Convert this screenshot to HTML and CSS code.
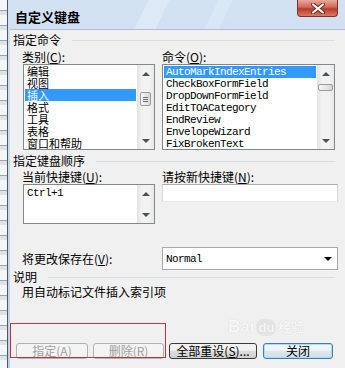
FILE: index.html
```html
<!DOCTYPE html>
<html lang="zh-CN">
<head>
    <meta charset="UTF-8">
    <meta name="viewport" content="width=device-width, initial-scale=1.0">
    <title>自定义键盘</title>
    <link rel="stylesheet" href="styles.css">
</head>
<body>
    <div class="screen">
        <div class="backdrop"></div>
        <div class="window">
            <div class="titlebar">
                <span class="title">自定义键盘</span>
                <div class="close-btn">
                    <svg width="16" height="11" viewBox="0 0 16 11">
                        <path d="M3 1.5 L13 9.5 M13 1.5 L3 9.5" stroke="#6a2a22" stroke-width="4" stroke-linecap="round"/>
                        <path d="M3 1.5 L13 9.5 M13 1.5 L3 9.5" stroke="#ffffff" stroke-width="2.2" stroke-linecap="round"/>
                    </svg>
                </div>
            </div>

            <div class="dialog">
                <div class="group-head"><span>指定命令</span><span class="rule"></span></div>
                <div class="cols first">
                    <div class="col-left">
                        <div class="label">类别(<u>C</u>):</div>
                        <div class="listbox list-cat">
                            <ul class="items">
                                <li>编辑</li>
                                <li>视图</li>
                                <li class="sel">插入</li>
                                <li>格式</li>
                                <li>工具</li>
                                <li>表格</li>
                                <li>窗口和帮助</li>
                            </ul>
                            <div class="vscroll">
                                <div class="sb-btn up"></div>
                                <div class="track"><div class="thumb thumb-cat"><span></span><span></span><span></span></div></div>
                                <div class="sb-btn down"></div>
                            </div>
                        </div>
                    </div>
                    <div class="col-right">
                        <div class="label">命令(<u>O</u>):</div>
                        <div class="listbox list-cmd">
                            <ul class="items mono">
                                <li class="sel">AutoMarkIndexEntries</li>
                                <li>CheckBoxFormField</li>
                                <li>DropDownFormField</li>
                                <li>EditTOACategory</li>
                                <li>EndReview</li>
                                <li>EnvelopeWizard</li>
                                <li>FixBrokenText</li>
                            </ul>
                            <div class="vscroll">
                                <div class="sb-btn up"></div>
                                <div class="track"><div class="thumb thumb-cmd"></div></div>
                                <div class="sb-btn down"></div>
                            </div>
                        </div>
                    </div>
                </div>

                <div class="group-head second"><span>指定键盘顺序</span><span class="rule"></span></div>
                <div class="cols keys">
                    <div class="col-left">
                        <div class="label">当前快捷键(<u>U</u>):</div>
                        <div class="listbox list-keys">
                            <ul class="items mono">
                                <li>Ctrl+1</li>
                            </ul>
                            <div class="vscroll">
                                <div class="sb-btn up"></div>
                                <div class="track"></div>
                                <div class="sb-btn down"></div>
                            </div>
                        </div>
                    </div>
                    <div class="col-right">
                        <div class="label">请按新快捷键(<u>N</u>):</div>
                        <div class="textbox"></div>
                    </div>
                </div>

                <div class="cols save">
                    <div class="col-left save-label">将更改保存在(<u>V</u>):</div>
                    <div class="col-right">
                        <div class="combo"><span class="mono">Normal</span><span class="combo-arrow"></span></div>
                    </div>
                </div>

                <div class="group-head"><span>说明</span><span class="rule"></span></div>
                <div class="desc">用自动标记文件插入索引项</div>

                <div class="buttons">
                    <button class="btn btn-assign" disabled>指定(<u>A</u>)</button>
                    <button class="btn btn-remove" disabled>删除(<u>R</u>)</button>
                    <button class="btn btn-reset">全部重设(<u>S</u>)...</button>
                    <button class="btn btn-close">关闭</button>
                </div>
            </div>
        </div>

        <div class="annot"></div>
        <div class="watermark"><span class="wm-bai">Bai</span><span class="wm-du">du</span><span class="wm-jy">经验</span></div>
    </div>
</body>
</html>
```

FILE: styles.css
```css
* {
    box-sizing: border-box;
}
body {
    margin: 0;
    width: 345px;
    height: 368px;
    overflow: hidden;
    font-family: "Noto Sans CJK SC", sans-serif;
    font-size: 12px;
    color: #000;
    background: #dfe6ee;
}
.screen {
    position: relative;
    display: flex;
    width: 345px;
    height: 368px;
}
.backdrop {
    width: 7px;
    background: repeating-linear-gradient(to bottom, #f4f5f7 0 10px, #9aa4ae 10px 11px, #dde2e8 11px 15px);
}
.window {
    flex: 1;
    display: flex;
    flex-direction: column;
    border-left: 1px solid #4a5868;
    background: linear-gradient(to bottom, #d2e2f3, #bdd2ea);
}
.titlebar {
    height: 29px;
    flex: none;
    display: flex;
    justify-content: space-between;
    align-items: flex-start;
    padding-left: 7px;
    background: linear-gradient(115deg, rgba(255,255,255,0) 0 40%, rgba(255,255,255,.25) 40% 46%, rgba(255,255,255,0) 46% 60%, rgba(255,255,255,.2) 60% 64%, rgba(255,255,255,0) 64%);
}
.title {
    padding-top: 8px;
    line-height: 17px;
    font-size: 13px;
    font-weight: bold;
}
.close-btn {
    width: 41px;
    height: 17px;
    margin-right: 7px;
    display: flex;
    align-items: center;
    justify-content: center;
    border: 1px solid #7d332b;
    border-top: none;
    border-radius: 0 0 4px 4px;
    background: linear-gradient(to bottom, #e9a99c, #d0675a 45%, #b83a2c 55%, #d97b62);
}

.dialog {
    flex: 1;
    margin-left: 2px;
    padding: 3px 7px 0 3px;
    background: #f0f0f0;
    border-top: 1px solid #aebfd3;
}
.group-head {
    display: flex;
    align-items: center;
    height: 14px;
    line-height: 14px;
    white-space: nowrap;
}
.group-head .rule {
    flex: 1;
    height: 1px;
    margin: 0 3px 0 11px;
    background: #d5dfe5;
}
.group-head.second {
    margin-top: 4px;
}
.cols {
    display: flex;
    padding-left: 9px;
}
.cols.first {
    margin-top: 3px;
}
.cols.keys {
    margin-top: 2px;
}
.cols.save {
    margin-top: 23px;
}
.col-left {
    width: 140px;
    flex: none;
}
.col-right {
    flex: 1;
}
.label {
    height: 14px;
    line-height: 14px;
    white-space: nowrap;
}
.save-label {
    align-self: center;
    line-height: 14px;
}

.listbox {
    display: flex;
    border: 1px solid #828790;
    background: #fff;
}
.list-cat {
    width: 132px;
    height: 86px;
    margin-left: 1px;
}
.list-cmd {
    width: 173px;
    height: 86px;
}
.list-keys {
    width: 132px;
    height: 40px;
    margin-left: 1px;
}
.items {
    flex: 1;
    margin: 0;
    padding: 0 1px;
    list-style: none;
    overflow: hidden;
}
.items li {
    height: 12px;
    line-height: 12px;
    padding-left: 2px;
    white-space: nowrap;
}
.list-cat .items li {
    font-size: 11px;
}
.items li.sel {
    background: #3399ff;
    color: #fff;
}
.mono {
    font-family: "Liberation Mono", monospace;
    font-size: 11px;
    letter-spacing: -0.6px;
}
.list-cmd .items {
    padding-top: 1px;
}
.list-keys .items {
    padding-top: 2px;
}

.vscroll {
    width: 17px;
    flex: none;
    display: flex;
    flex-direction: column;
    background: linear-gradient(to right, #e3e3e3, #f2f2f2 30%, #f2f2f2 70%, #e8e8e8);
}
.sb-btn {
    height: 17px;
    flex: none;
    display: flex;
    align-items: center;
    justify-content: center;
}
.sb-btn.up::before {
    content: "";
    border-left: 4px solid transparent;
    border-right: 4px solid transparent;
    border-bottom: 4px solid #4f4f4f;
}
.sb-btn.down::before {
    content: "";
    border-left: 4px solid transparent;
    border-right: 4px solid transparent;
    border-top: 4px solid #4f4f4f;
}
.track {
    flex: 1;
}
.thumb {
    border: 1px solid #9b9b9b;
    border-radius: 2px;
    background: linear-gradient(to right, #f7f7f7, #e4e4e4 60%, #d6d6d6);
}
.thumb-cat {
    height: 14px;
    margin: 10px 3px 0;
    display: flex;
    flex-direction: column;
    justify-content: center;
    align-items: center;
    gap: 1px;
}
.thumb-cat span {
    width: 5px;
    height: 1px;
    background: #6f6f6f;
}
.thumb-cmd {
    height: 7px;
    margin: 2px 1px 0;
}

.textbox {
    width: 176px;
    height: 18px;
    border: 1px solid #abadb3;
    border-left-color: #d5d7db;
    border-right-color: #d5d7db;
    border-bottom-color: #e3e9ef;
    background: #fff;
}
.combo {
    width: 176px;
    height: 23px;
    display: flex;
    align-items: center;
    justify-content: space-between;
    padding: 0 5px 0 3px;
    border: 1px solid #a9a9a9;
    background: #fff;
}
.combo-arrow {
    border-left: 4px solid transparent;
    border-right: 4px solid transparent;
    border-top: 4px solid #000;
}
.desc {
    margin-top: 1px;
    padding-left: 9px;
    height: 14px;
    line-height: 14px;
}

.buttons {
    display: flex;
    margin-top: 44px;
    padding-left: 3px;
}
.btn {
    height: 16px;
    padding: 0;
    margin-right: 5px;
    font-family: inherit;
    font-size: 12px;
    line-height: 14px;
    color: #000;
    border: 1px solid #707070;
    border-radius: 3px;
    background: linear-gradient(to bottom, #f2f2f2 0 45%, #dddddd 50%, #cfcfcf);
}
.btn u {
    text-decoration: none;
}
.btn-reset u {
    text-decoration: underline;
}
.btn:disabled {
    color: #a0a0a0;
    border-color: #adb2b5;
    background: #f4f4f4;
}
.btn-assign {
    width: 72px;
}
.btn-remove {
    width: 71px;
}
.btn-reset {
    width: 88px;
    margin-right: 6px;
    border-color: #3a3a3a;
}
.btn-close {
    width: 70px;
    border-color: #3c7fb1;
    box-shadow: inset 0 0 0 1px #a8dff6;
    background: linear-gradient(to bottom, #eef4f8 0 45%, #dfe7ee 50%, #d2dce5);
}

.annot {
    position: absolute;
    left: 10px;
    top: 323px;
    width: 156px;
    height: 35px;
    border: 1px solid #cc3333;
}
.watermark {
    position: absolute;
    left: 228px;
    top: 317px;
    display: flex;
    align-items: baseline;
    gap: 2px;
    font-family: "Liberation Sans", sans-serif;
    font-weight: bold;
    font-size: 17px;
    color: rgba(255, 255, 255, 0.85);
    text-shadow: 0 0 1px #c9c9c9;
}
.wm-du {
    font-size: 13px;
    padding: 1px 2px;
    border-radius: 8px;
    background: rgba(220, 220, 220, 0.6);
}
.wm-jy {
    font-family: "Noto Sans CJK SC", sans-serif;
    font-size: 13px;
}
```
